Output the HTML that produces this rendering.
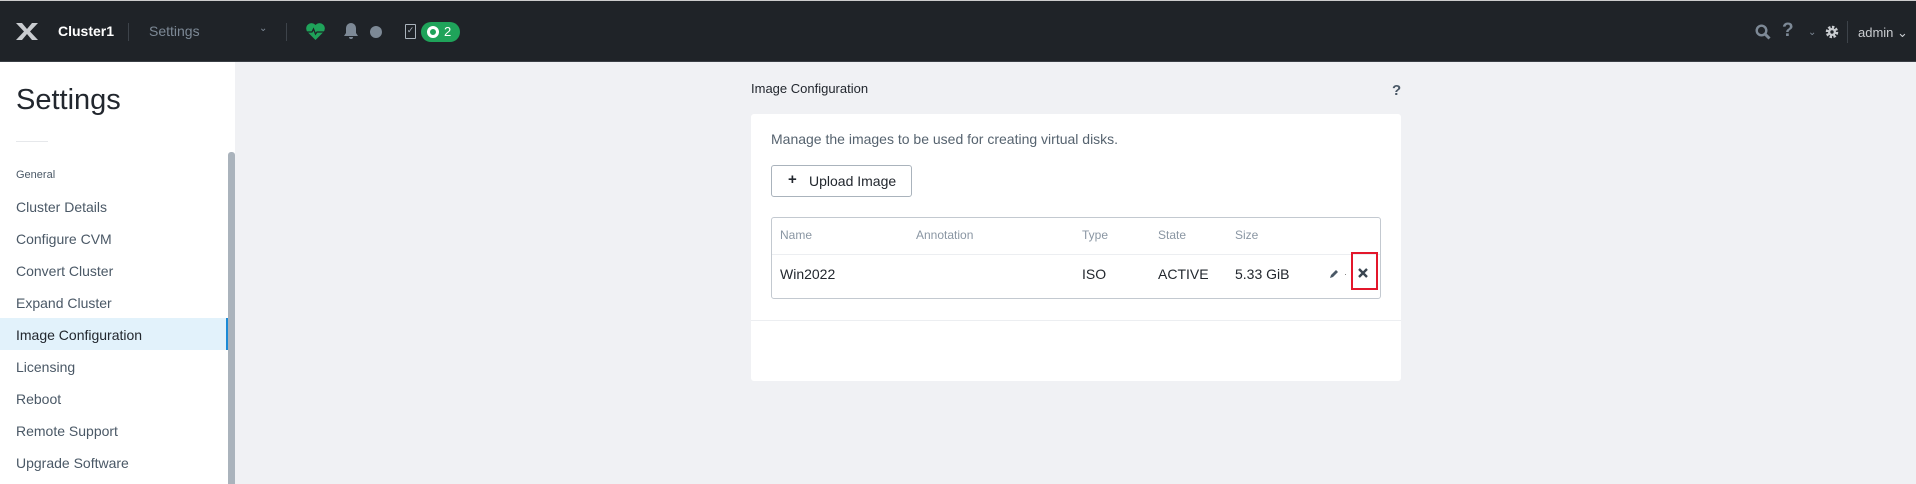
<!DOCTYPE html>
<html><head><meta charset="utf-8"><style>
*{margin:0;padding:0;box-sizing:border-box}
body{width:1916px;height:484px;overflow:hidden;background:#f0f1f4;font-family:"Liberation Sans",sans-serif;position:relative}
.a{position:absolute;white-space:nowrap}
#hdr{position:absolute;left:0;top:0;width:1916px;height:62px;background:#1f2328;border-top:1px solid #ccc;border-bottom:1px solid #3a3f45}
#side{position:absolute;left:0;top:62px;width:235px;height:422px;background:#fff}
.it{position:absolute;left:16px;font-size:14px;color:#4a5866}
.th{position:absolute;top:228px;font-size:12px;color:#8a96a3}
.td{position:absolute;top:266px;font-size:14px;color:#22272e}
</style></head><body>
<div id="hdr">
<svg class="a" style="left:16px;top:22px" width="22" height="17" viewBox="0 0 22 17"><path d="M0 0h6l5 6 5-6h6l-8 8.5 8 8.5h-6l-5-6-5 6H0l8-8.5z" fill="#c9ccd0"/></svg>
<div class="a" style="left:58px;top:22px;font-size:14px;color:#fff;font-weight:bold">Cluster1</div>
<div class="a" style="left:128px;top:22px;width:1px;height:18px;background:#3d434a"></div>
<div class="a" style="left:149px;top:22px;font-size:14px;color:#7d8996">Settings</div>
<div class="a" style="left:259px;top:22px;font-size:10px;color:#7d8996">⌄</div>
<div class="a" style="left:286px;top:22px;width:1px;height:18px;background:#3d434a"></div>
<svg class="a" style="left:306px;top:22px" width="19" height="17" viewBox="0 0 19 17"><path d="M9.5 17L1.5 9A4.8 4.8 0 0 1 9.5 2 4.8 4.8 0 0 1 17.5 9z" fill="#1fa35a"/><path d="M1 9h5l1.5-3 2 5 1.5-2h7" stroke="#1f2328" stroke-width="1.3" fill="none"/></svg>
<svg class="a" style="left:344px;top:22px" width="14" height="17" viewBox="0 0 14 17"><path d="M7 0a5 5 0 0 1 5 5v5l2 3H0l2-3V5a5 5 0 0 1 5-5zM5 14h4a2 2 0 0 1-4 0z" fill="#7d8996"/></svg>
<div class="a" style="left:370px;top:25px;width:12px;height:12px;border-radius:50%;background:#7d8996"></div>
<div class="a" style="left:405px;top:23px;width:11px;height:15px;border:1.5px solid #aab3bc;border-radius:1px;color:#aab3bc;font-size:9px;line-height:11px;text-align:center">✓</div>
<div class="a" style="left:421px;top:21px;width:39px;height:20px;border-radius:10px;background:#1fa35a"></div>
<div class="a" style="left:427px;top:25px;width:12px;height:12px;border-radius:50%;border:3px solid #fff"></div>
<div class="a" style="left:444px;top:23px;font-size:13px;color:#fff">2</div>
<svg class="a" style="left:1755px;top:23px" width="16" height="16" viewBox="0 0 16 16"><circle cx="6.5" cy="6.5" r="4.8" stroke="#7d8996" stroke-width="2.4" fill="none"/><path d="M10 10l4.5 4.5" stroke="#7d8996" stroke-width="3"/></svg>
<div class="a" style="left:1782px;top:19px;font-size:19px;font-weight:bold;color:#7d8996">?</div>
<div class="a" style="left:1808px;top:26px;font-size:10px;color:#7d8996">⌄</div>
<svg class="a" style="left:1825px;top:24px" width="14" height="14" viewBox="0 0 14 14"><circle cx="7" cy="7" r="4.5" fill="none" stroke="#c9ccd0" stroke-width="3.5" stroke-dasharray="2.2 1.3"/><circle cx="7" cy="7" r="4" fill="#c9ccd0"/><circle cx="7" cy="7" r="1.7" fill="#1f2328"/></svg>
<div class="a" style="left:1847px;top:20px;width:1px;height:22px;background:#3d434a"></div>
<div class="a" style="left:1858px;top:24px;font-size:13px;color:#c9ccd0">admin ⌄</div>
</div>
<div id="side">
<div class="a" style="left:16px;top:22px;font-size:29px;color:#22272e">Settings</div>
<div class="a" style="left:16px;top:79px;width:32px;height:1px;background:#e6e8eb"></div>
<div class="a" style="left:228px;top:90px;width:7px;height:332px;background:#aab3bc;border-radius:3px 3px 0 0"></div>
<div class="it" style="top:107px;font-size:11px">General</div>
<div class="it" style="top:137px">Cluster Details</div>
<div class="it" style="top:169px">Configure CVM</div>
<div class="it" style="top:201px">Convert Cluster</div>
<div class="it" style="top:233px">Expand Cluster</div>
<div class="a" style="left:0;top:256px;width:228px;height:32px;background:#e2f2fb;border-right:2px solid #1b8ad6"></div>
<div class="it" style="top:265px;color:#22272e">Image Configuration</div>
<div class="it" style="top:297px">Licensing</div>
<div class="it" style="top:329px">Reboot</div>
<div class="it" style="top:361px">Remote Support</div>
<div class="it" style="top:393px">Upgrade Software</div>
</div>
<div class="a" style="left:751px;top:81px;font-size:13px;color:#22272e">Image Configuration</div>
<div class="a" style="left:1392px;top:82px;font-size:15px;font-weight:bold;color:#4a5866">?</div>
<div class="a" style="left:751px;top:114px;width:650px;height:267px;background:#fff;border-radius:3px"></div>
<div class="a" style="left:751px;top:320px;width:650px;height:1px;background:#eceef1"></div>
<div class="a" style="left:771px;top:131px;font-size:14px;color:#56636f">Manage the images to be used for creating virtual disks.</div>
<div class="a" style="left:771px;top:165px;width:141px;height:32px;border:1px solid #aab3bc;border-radius:3px;background:#fff"></div>
<div class="a" style="left:788px;top:171px;font-size:15px;font-weight:bold;color:#22272e">+</div>
<div class="a" style="left:809px;top:173px;font-size:14px;color:#22272e">Upload Image</div>
<div class="a" style="left:771px;top:217px;width:610px;height:82px;border:1px solid #c3c9d0;border-radius:3px"></div>
<div class="a" style="left:772px;top:254px;width:608px;height:1px;background:#eceef1"></div>
<div class="th" style="left:780px">Name</div><div class="th" style="left:916px">Annotation</div><div class="th" style="left:1082px">Type</div><div class="th" style="left:1158px">State</div><div class="th" style="left:1235px">Size</div>
<div class="td" style="left:780px">Win2022</div><div class="td" style="left:1082px">ISO</div><div class="td" style="left:1158px">ACTIVE</div><div class="td" style="left:1235px">5.33 GiB</div>
<svg class="a" style="left:1329px;top:269px" width="10" height="10" viewBox="0 0 10 10"><path d="M1 9l1-3 5-5 2 2-5 5z" fill="#4a5866"/></svg>
<div class="a" style="left:1345px;top:274px;width:1px;height:1px;background:#888"></div>
<div class="a" style="left:1351px;top:252px;width:27px;height:38px;border:2px solid #e3172b"></div>
<svg class="a" style="left:1358px;top:268px" width="10" height="10" viewBox="0 0 10 10"><path d="M1 1l8 8M9 1l-8 8" stroke="#3a4550" stroke-width="2.4"/></svg>
</body></html>
